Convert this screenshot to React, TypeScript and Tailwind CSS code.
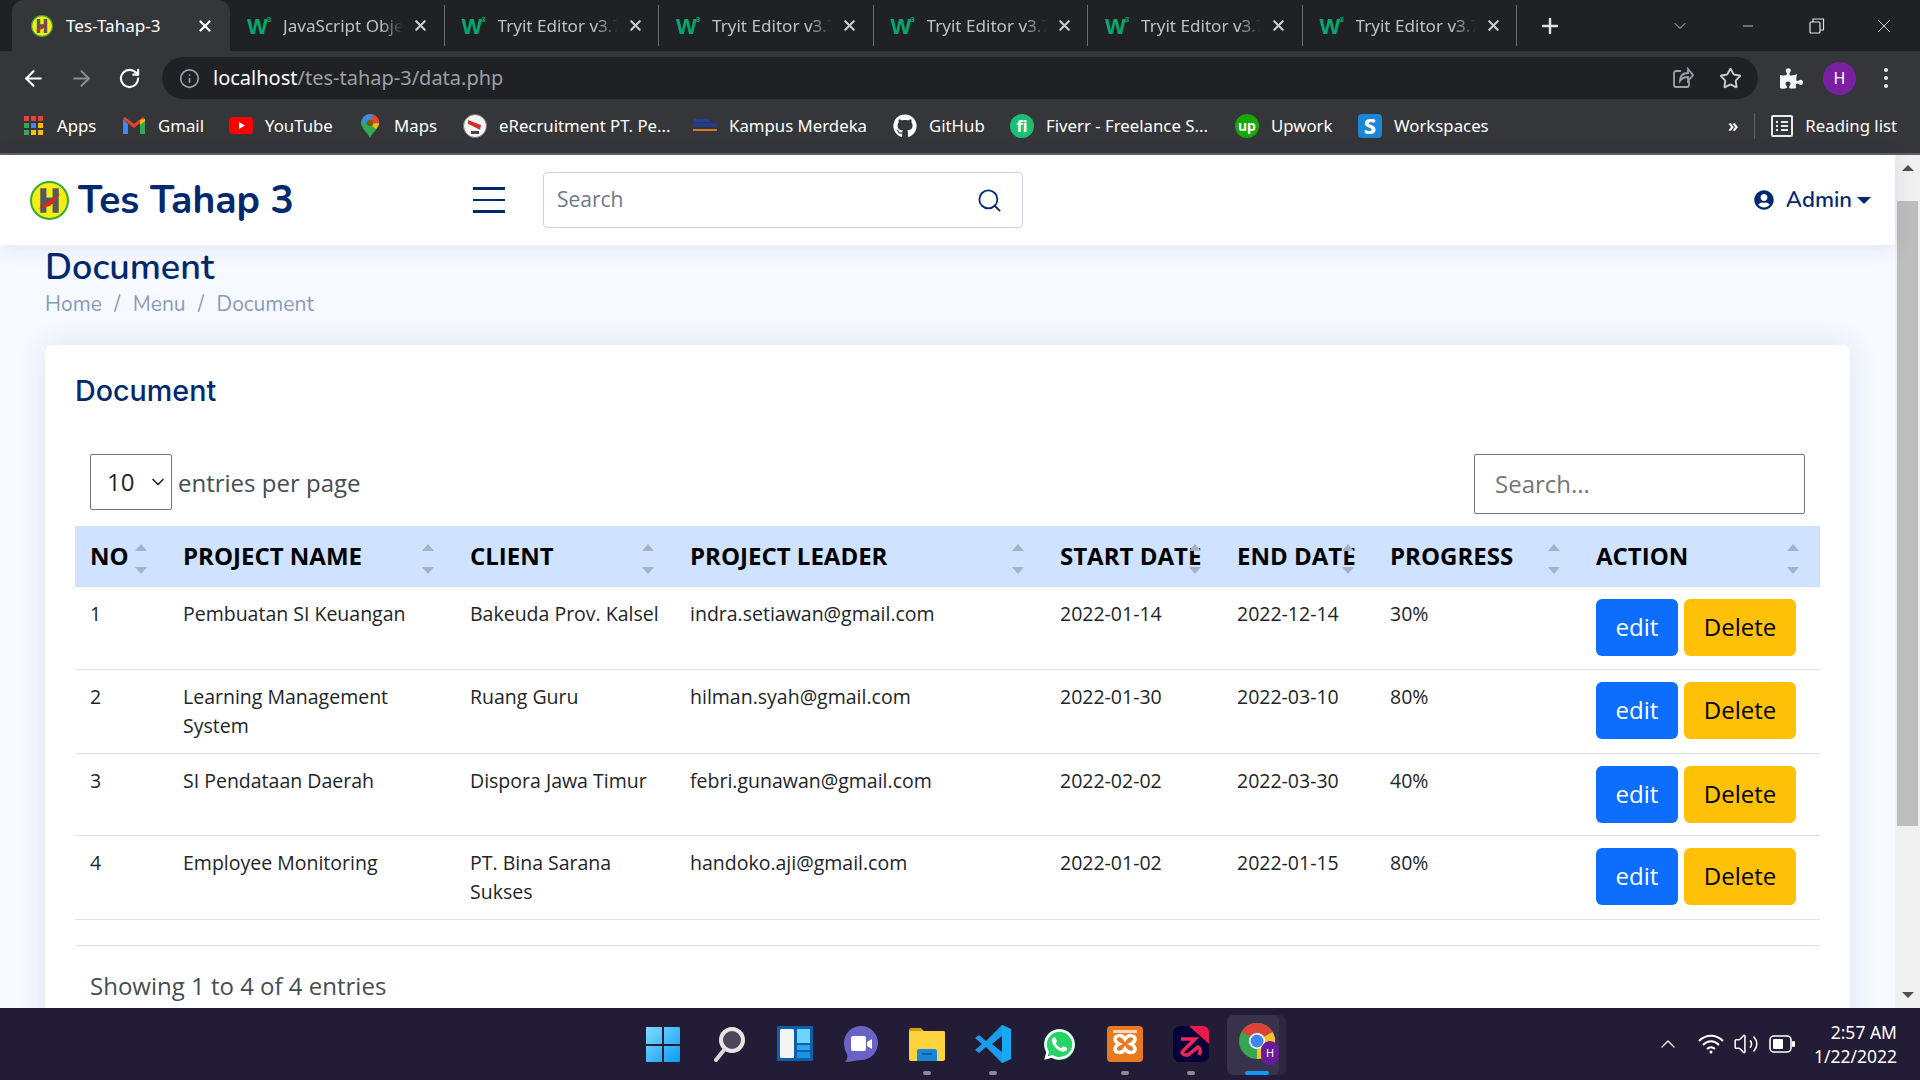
import React from "react";
import { ArrowLeft, ArrowRight, RotateCw, Info, Star, X, Plus, ChevronDown, ChevronUp, Minus, Search, Volume2 } from "lucide-react";
import { FaGithub, FaPuzzlePiece, FaUserCircle, FaWhatsapp } from "react-icons/fa";

const FontSys = "font-['Noto_Sans','Open_Sans',sans-serif]";

function LogoH({ size = 38 }: { size?: number }) {
  return (
    <svg width={size} height={size} viewBox="0 0 38 38">
      <circle cx="19" cy="19" r="18" fill="#f6ee12" stroke="#3aa935" strokeWidth="2" />
      <path d="M10 7h6v9h6V7h6v24h-6v-9h-6v9h-6z" fill="#55585c" />
      <path d="M8 27L30 12L20 24z" fill="#e2231a" />
    </svg>
  );
}

function W3() {
  return (
    <span className="flex h-[22px] w-[26px] shrink-0 items-start text-[#04aa6d] font-['Liberation_Sans',sans-serif] font-bold">
      <span className="text-[22px] leading-[23px] tracking-[-1px]">W</span>
      <span className="text-[8px] leading-[10px]">3</span>
    </span>
  );
}

function Tab({ label }: { label: string }) {
  return (
    <div className="flex h-[41px] w-[214.5px] shrink-0 items-center border-r border-[#6b6c70] pl-[17px]">
      <W3 />
      <span className="ml-[10px] w-[120px] overflow-hidden whitespace-nowrap text-[17.1px] text-[#bdc1c6] [mask-image:linear-gradient(to_right,black_82%,transparent)]">{label}</span>
      <X size={17} strokeWidth={3} className="ml-[9px] text-[#c8ccd0]" />
    </div>
  );
}

function Bookmark({ w, icon, label }: { w: string; icon: React.ReactNode; label: string }) {
  return (
    <div className={`flex items-center gap-[12px] ${w}`}>
      <span className="flex h-[24px] w-[24px] shrink-0 items-center justify-center">{icon}</span>
      <span className="whitespace-nowrap text-[16.8px] text-white">{label}</span>
    </div>
  );
}

const AppsIcon = () => {
  const c = ["#ea4335", "#ea4335", "#ea4335", "#34a853", "#4285f4", "#fbbc04", "#34a853", "#fbbc04", "#fbbc04"];
  return (
    <span className="grid grid-cols-3 gap-[2px]">
      {c.map((x, i) => (
        <span key={i} className="h-[5px] w-[5px]" style={{ background: x }} />
      ))}
    </span>
  );
};

const GmailIcon = () => (
  <svg width="22" height="17" viewBox="0 0 22 17">
    <path d="M0 2v15h5V7z" fill="#4285f4" />
    <path d="M22 2v15h-5V7z" fill="#34a853" />
    <path d="M0 2l11 9 11-9-2-2-9 7-9-7z" fill="#ea4335" />
    <path d="M17 3l5-1v2l-5 4z" fill="#fbbc04" />
  </svg>
);
const YouTubeIcon = () => (
  <svg width="24" height="17" viewBox="0 0 24 17">
    <rect width="24" height="17" rx="4" fill="#ff0000" />
    <path d="M10 5l6 3.5-6 3.5z" fill="#fff" />
  </svg>
);
const MapsIcon = () => (
  <svg width="18" height="24" viewBox="0 0 18 24">
    <path d="M9 0a9 9 0 0 1 9 9c0 5-6 9-9 15C6 18 0 14 0 9a9 9 0 0 1 9-9z" fill="#34a853" />
    <path d="M3 3a9 9 0 0 1 9-2.5L4 10 1 8a9 9 0 0 1 2-5z" fill="#4285f4" />
    <path d="M12 .5A9 9 0 0 1 18 9l-9 1z" fill="#ea4335" />
    <path d="M18 9c0 2-1 4-3 6L9 10z" fill="#fbbc04" />
    <circle cx="9" cy="9" r="3.2" fill="#7a5a10" />
  </svg>
);
const ERecruitIcon = () => (
  <svg width="24" height="24" viewBox="0 0 24 24">
    <circle cx="12" cy="12" r="11.5" fill="#f4f4f4" stroke="#777" />
    <path d="M5 6l13 5-1 5L5 10z" fill="#d32f2f" />
    <path d="M5 10l12 6-2 2L6 13z" fill="#fff" />
    <rect x="8" y="17" width="8" height="3" fill="#444" />
  </svg>
);
const KampusIcon = () => (
  <svg width="24" height="14" viewBox="0 0 24 14">
    <rect x="1" y="0" width="15" height="3" fill="#1f3f9e" />
    <rect x="0" y="4" width="24" height="4" fill="#22398f" />
    <rect x="0" y="10" width="24" height="2" fill="#d47a24" />
  </svg>
);

function ChromeBar() {
  return (
    <div className={`shrink-0 ${FontSys}`}>
      <div className="flex h-[51px] items-end bg-[#202124] pl-[12px]">
        <div className="flex h-[51px] w-[218px] shrink-0 items-center rounded-t-[12px] bg-[#35363a] pl-[19px]">
          <LogoH size={22} />
          <span className="ml-[13px] w-[120px] whitespace-nowrap text-[17.1px] text-white">Tes-Tahap-3</span>
          <X size={18} strokeWidth={3} className="ml-[10px] text-white" />
        </div>
        <div className="flex h-[51px] items-center">
          {["JavaScript Obje", "Tryit Editor v3.7", "Tryit Editor v3.7", "Tryit Editor v3.7", "Tryit Editor v3.7", "Tryit Editor v3.7"].map((t, i) => (
            <Tab key={i} label={t} />
          ))}
        </div>
        <div className="flex h-[51px] flex-1 items-center text-[#dee1e6]">
          <Plus size={24} strokeWidth={2.5} className="ml-[21px]" />
          <ChevronDown size={20} strokeWidth={1} className="ml-[108px]" />
          <Minus size={16} strokeWidth={1.2} className="ml-[50px]" />
          <svg width="16" height="16" viewBox="0 0 16 16" className="ml-[53px]" fill="none" stroke="#dee1e6" strokeWidth="1.2">
            <rect x="1" y="4" width="10" height="11" rx="1" />
            <path d="M4 4V1h10.500v11H11" />
          </svg>
          <X size={22} strokeWidth={1} className="ml-[48px]" />
        </div>
      </div>
      <div className="flex h-[52px] items-center bg-[#35363a] pt-[2px]">
        <ArrowLeft size={25} strokeWidth={2} className="ml-[21px] text-white" />
        <ArrowRight size={25} strokeWidth={2} className="ml-[23px] text-[#8a8b8e]" />
        <RotateCw size={23} strokeWidth={2.2} className="ml-[24px] text-white" />
        <div className="ml-[21px] flex h-[42px] w-[1596px] items-center rounded-full bg-[#202124]">
          <Info size={21} strokeWidth={2} className="ml-[17px] text-[#9aa0a6]" />
          <div className="ml-[13px] whitespace-nowrap text-[20px]">
            <span className="text-white">localhost</span>
            <span className="text-[#9aa0a6]">/tes-tahap-3/data.php</span>
          </div>
          <svg width="22" height="24" viewBox="0 0 22 24" fill="none" stroke="#9aa0a6" strokeWidth="1.8" className="ml-auto mr-[25px]">
            <path d="M9 5H4a2 2 0 0 0-2 2v12a2 2 0 0 0 2 2h11a2 2 0 0 0 2-2v-4" />
            <path d="M8 15c0-5 3-8 8-8V3l5 6-5 6v-4c-4 0-6 1-8 4z" />
          </svg>
          <Star size={23} strokeWidth={2} className="mr-[16px] text-[#c8cbd0]" />
        </div>
        <FaPuzzlePiece size={23} className="ml-[22px] text-[#f1f3f4]" />
        <span className="ml-[20px] flex h-[33px] w-[33px] items-center justify-center rounded-full bg-[#7b1fa2] text-[16px] text-white">H</span>
        <span className="ml-[28px] flex flex-col gap-[4px]">
          <span className="h-[4px] w-[4px] rounded-full bg-[#e8eaed]" />
          <span className="h-[4px] w-[4px] rounded-full bg-[#e8eaed]" />
          <span className="h-[4px] w-[4px] rounded-full bg-[#e8eaed]" />
        </span>
      </div>
      <div className="flex h-[52px] items-center border-b-2 border-[#5f6064] bg-[#35363a] pb-[5px] pl-[21px]">
        <Bookmark w="w-[101px]" icon={<AppsIcon />} label="Apps" />
        <Bookmark w="w-[107px]" icon={<GmailIcon />} label="Gmail" />
        <Bookmark w="w-[129px]" icon={<YouTubeIcon />} label="YouTube" />
        <Bookmark w="w-[105px]" icon={<MapsIcon />} label="Maps" />
        <Bookmark w="w-[230px]" icon={<ERecruitIcon />} label="eRecruitment PT. Pe..." />
        <Bookmark w="w-[200px]" icon={<KampusIcon />} label="Kampus Merdeka" />
        <Bookmark w="w-[117px]" icon={<FaGithub size={24} className="text-white" />} label="GitHub" />
        <Bookmark
          w="w-[225px]"
          icon={<span className="flex h-[24px] w-[24px] items-center justify-center rounded-full bg-[#1dbf73] text-[16px] font-bold text-white">fi</span>}
          label="Fiverr - Freelance S..."
        />
        <Bookmark
          w="w-[123px]"
          icon={<span className="flex h-[24px] w-[24px] items-center justify-center rounded-full bg-[#14a800] text-[14px] font-bold text-white">up</span>}
          label="Upwork"
        />
        <Bookmark
          w="w-[370px]"
          icon={<span className="flex h-[24px] w-[24px] items-center justify-center rounded-[4px] bg-[#1a87d6] text-[22px] font-extrabold text-white">S</span>}
          label="Workspaces"
        />
        <span className="text-[18px] font-semibold text-white">»</span>
        <span className="ml-[16px] h-[26px] w-px bg-[#5f6064]" />
        <svg width="22" height="24" viewBox="0 0 22 24" fill="none" stroke="#e8eaed" strokeWidth="2" className="ml-[16px]">
          <rect x="1" y="2" width="20" height="20" rx="1" />
          <path d="M5 8h2M5 12h2M5 16h2M10 8h7M10 12h7M10 16h7" />
        </svg>
        <span className="ml-[12px] whitespace-nowrap text-[16.8px] text-white">Reading list</span>
      </div>
    </div>
  );
}

function SiteHeader() {
  return (
    <header className="relative z-10 flex h-[90px] shrink-0 items-center bg-white pl-[30px] pr-[24px] shadow-[0px_2px_20px_rgba(1,41,112,0.1)]">
      <div className="flex w-[443px] items-center gap-[9px]">
        <LogoH size={39} />
        <span className="font-['Nunito','Lato',sans-serif] text-[39px] font-bold leading-none text-[#012970]">Tes Tahap 3</span>
      </div>
      <div className="flex w-[32px] flex-col gap-[9px]">
        <span className="h-[3px] bg-[#012970]" />
        <span className="h-[2px] bg-[#012970]" />
        <span className="h-[3px] bg-[#012970]" />
      </div>
      <div className="ml-[38px] flex h-[56px] w-[480px] items-center rounded-[4px] border border-[#ccd4e2] pl-[13px] pr-[19px]">
        <input placeholder="Search" className="min-w-0 flex-1 font-['Open_Sans',sans-serif] text-[21px] outline-none placeholder:text-[#6f7887]" />
        <Search size={27} strokeWidth={1.6} className="text-[#012970]" />
      </div>
      <div className="ml-auto flex items-center text-[#012970]">
        <FaUserCircle size={20} />
        <span className="ml-[12px] font-['Nunito','Lato',sans-serif] text-[22px] font-semibold">Admin</span>
        <span className="ml-[5px] h-0 w-0 border-x-[7px] border-t-[7px] border-x-transparent border-t-[#012970]" />
      </div>
    </header>
  );
}

const cols = [
  { t: "NO", w: "w-[93px]" },
  { t: "PROJECT NAME", w: "w-[287px]" },
  { t: "CLIENT", w: "w-[220px]" },
  { t: "PROJECT LEADER", w: "w-[370px]" },
  { t: "START DATE", w: "w-[177px]" },
  { t: "END DATE", w: "w-[153px]" },
  { t: "PROGRESS", w: "w-[206px]" },
  { t: "ACTION", w: "w-[239px]" },
];

const rows = [
  { h: "h-[83px]", c: ["1", "Pembuatan SI Keuangan", "Bakeuda Prov. Kalsel", "indra.setiawan@gmail.com", "2022-01-14", "2022-12-14", "30%"] },
  { h: "h-[84px]", c: ["2", "Learning Management System", "Ruang Guru", "hilman.syah@gmail.com", "2022-01-30", "2022-03-10", "80%"] },
  { h: "h-[82px]", c: ["3", "SI Pendataan Daerah", "Dispora Jawa Timur", "febri.gunawan@gmail.com", "2022-02-02", "2022-03-30", "40%"] },
  { h: "h-[84px]", c: ["4", "Employee Monitoring", "PT. Bina Sarana Sukses", "handoko.aji@gmail.com", "2022-01-02", "2022-01-15", "80%"] },
];

function DataTable() {
  return (
    <table className="w-full table-fixed text-left text-[#212529]">
      <thead>
        <tr className="h-[60px] border-b border-[#d8dde3] bg-[#cfe2ff]">
          {cols.map((c) => (
            <th key={c.t} className={`relative whitespace-nowrap px-[15px] text-[24px] font-bold text-black ${c.w}`}>
              {c.t}
              <span className="absolute right-[21px] top-[18px] h-0 w-0 border-x-[6px] border-b-[7px] border-x-transparent border-b-[#a6b3c6]" />
              <span className="absolute right-[21px] top-[41px] h-0 w-0 border-x-[6px] border-t-[7px] border-x-transparent border-t-[#a6b3c6]" />
            </th>
          ))}
        </tr>
      </thead>
      <tbody>
        {rows.map((r) => (
          <tr key={r.c[0]} className={`border-b border-[#dee2e6] ${r.h}`}>
            {r.c.map((v, i) => (
              <td key={i} className="px-[15px] py-[12px] align-top text-[19.5px] leading-[29px]">
                {v}
              </td>
            ))}
            <td className="px-[15px] py-[12px] align-top">
              <div className="flex gap-[6px]">
                <button className="h-[57px] w-[82px] rounded-[6px] bg-[#0d6efd] text-[24px] text-white">edit</button>
                <button className="h-[57px] w-[112px] rounded-[6px] bg-[#ffc107] text-[24px] text-black">Delete</button>
              </div>
            </td>
          </tr>
        ))}
      </tbody>
    </table>
  );
}

function Content() {
  return (
    <section className="flex-1 overflow-hidden bg-[#f6f9ff] px-[45px] pt-[1px] font-['Open_Sans',sans-serif]">
      <h1 className="font-['Nunito','Lato',sans-serif] text-[36px] font-semibold leading-[43px] text-[#012970]">Document</h1>
      <nav className="flex h-[31px] items-center gap-[12.5px] font-['Nunito','Lato',sans-serif] text-[21px] text-[#899bbd]">
        <span>Home</span>
        <span>/</span>
        <span>Menu</span>
        <span>/</span>
        <span>Document</span>
      </nav>
      <div className="mt-[25px] rounded-[7px] bg-white px-[30px] pt-[30px] pb-[40px] shadow-[0px_0px_30px_rgba(1,41,112,0.1)]">
        <h2 className="font-['Inter',sans-serif] text-[28.7px] font-medium leading-[32px] text-[#012970]">Document</h2>
        <div className="mt-[47px] flex items-start justify-between pl-[15px] pr-[15px]">
          <div className="flex items-center gap-[6px]">
            <div className="relative">
              <select defaultValue="10" className="h-[56px] w-[82px] appearance-none rounded-[2px] border border-[#767676] bg-white pl-[16px] text-[24px] text-[#212529] outline-none">
                <option value="10">10</option>
                <option value="25">25</option>
              </select>
              <ChevronDown size={20} strokeWidth={2} className="pointer-events-none absolute right-[4px] top-[18px] text-[#212529]" />
            </div>
            <span className="pt-[2px] text-[24px] text-[#454d55]">entries per page</span>
          </div>
          <input placeholder="Search..." className="h-[60px] w-[331px] rounded-[2px] border border-[#767676] px-[20px] pb-[2px] text-[24px] outline-none placeholder:text-[#757575]" />
        </div>
        <div className="mt-[12px]">
          <DataTable />
        </div>
        <div className="mt-[25px] border-t border-[#dee2e6] px-[15px] pt-[22px] text-[24px] leading-[36px] text-[#454d55]">Showing 1 to 4 of 4 entries</div>
      </div>
    </section>
  );
}

function Scrollbar() {
  return (
    <div className="flex w-[25px] shrink-0 flex-col items-center bg-[#f0f0f0] px-[2px]">
      <span className="mt-[10px] h-0 w-0 border-x-[6px] border-b-[6px] border-x-transparent border-b-[#505050]" />
      <span className="mt-[30px] h-[625px] w-full bg-[#bdbdbd]" />
      <span className="mt-auto mb-[10px] h-0 w-0 border-x-[6px] border-t-[6px] border-x-transparent border-t-[#505050]" />
    </div>
  );
}

const WinIcon = () => (
  <svg width="34" height="35" viewBox="0 0 34 35">
    <defs>
      <linearGradient id="w" x1="0" y1="0" x2="1" y2="1">
        <stop offset="0" stopColor="#7fdcff" />
        <stop offset="1" stopColor="#0a9bf2" />
      </linearGradient>
    </defs>
    <path d="M0 1a1 1 0 0 1 1-1h15v17H0zM18 0h15a1 1 0 0 1 1 1v16H18zM0 19h16v16H1a1 1 0 0 1-1-1zM18 19h16v15a1 1 0 0 1-1 1H18z" fill="url(#w)" />
  </svg>
);
const SearchIcon = () => (
  <svg width="32" height="36" viewBox="0 0 32 36">
    <circle cx="19" cy="14" r="11" fill="#4d4659" stroke="#e6e6e6" strokeWidth="4" />
    <path d="M11 24L3 34" stroke="#d8d8d8" strokeWidth="4" strokeLinecap="round" />
  </svg>
);
const WidgetsIcon = () => (
  <svg width="36" height="36" viewBox="0 0 36 36">
    <rect width="36" height="35" rx="1" fill="#0c5fa8" />
    <rect x="3" y="3" width="14" height="29" rx="1.500" fill="#f4f4f4" />
    <rect x="20" y="3" width="13" height="14" fill="#6dd5ff" />
    <rect x="20" y="19" width="13" height="5" fill="#28a8f0" />
    <rect x="20" y="26" width="13" height="6" fill="#1a93e4" />
  </svg>
);
const ChatIcon = () => (
  <svg width="34" height="36" viewBox="0 0 34 36">
    <path d="M17 0c10 0 17 8 17 17s-7 17-17 17c-4 0-10 2-16 2 2-2 3-5 2-8-2-3-3-7-3-11C0 8 7 0 17 0z" fill="#6a63c6" />
    <rect x="7" y="10" width="15" height="15" rx="2" fill="#fff" />
    <path d="M23 16l5-3v10l-5-3z" fill="#fff" />
  </svg>
);
const FolderIcon = () => (
  <svg width="36" height="34" viewBox="0 0 36 34">
    <path d="M0 3a2 2 0 0 1 2-2h10l3 3h19a2 2 0 0 1 2 2v6H0z" fill="#d99e06" />
    <rect y="4" width="36" height="30" rx="2" fill="#fdd23f" />
    <path d="M8 34v-10a2 2 0 0 1 2-2h16a2 2 0 0 1 2 2v10z" fill="#1a87d6" />
    <rect x="13" y="26" width="10" height="2" fill="#0c5fa8" />
  </svg>
);
const VsCodeIcon = () => (
  <svg width="36" height="38" viewBox="0 0 36 38">
    <path fillRule="evenodd" d="M27 0L11 16 4 10 0 13l7 6-7 6 4 3 7-6 16 16 9-4V4zM27 11v16l-10-8z" fill="#1c9be8" />
    <path d="M27 0l9 4v30l-9 4z" fill="#18a9f5" />
  </svg>
);
const WhatsAppIcon = () => (
  <span className="relative flex h-[35px] w-[35px] items-center justify-center">
    <span className="absolute inset-[2px] rounded-full bg-[#25d366]" />
    <FaWhatsapp size={35} className="relative text-white" />
  </span>
);
const XamppIcon = () => (
  <svg width="36" height="36" viewBox="0 0 36 36">
    <rect width="36" height="36" rx="4" fill="#e8791f" />
    <rect x="6" y="4" width="24" height="3" fill="#fff" opacity=".7" />
    <path d="M18 13c-3-5-10-4-10 0 0 2 2 4 4 5-2 1-4 3-4 5 0 4 7 5 10 0 3 5 10 4 10 0 0-2-2-4-4-5 2-1 4-3 4-5 0-4-7-5-10 0z" fill="none" stroke="#fff" strokeWidth="3.500" />
  </svg>
);
const StormIcon = () => (
  <svg width="36" height="36" viewBox="0 0 36 36">
    <rect width="36" height="36" rx="7" fill="#050238" />
    <path d="M16 0h14a6 6 0 0 1 6 6v12z" fill="#e8194b" />
    <path d="M8 13h14l-12 12c-2 2 0 4 3 4h2l10-8c3 2 3 4 1 8" fill="none" stroke="#f0245a" strokeWidth="3.500" />
  </svg>
);
const ChromeIcon = () => (
  <div className="relative h-[42px] w-[36px]">
    <svg width="36" height="36" viewBox="0 0 36 36" className="absolute left-0 top-0">
      <circle cx="18" cy="18" r="18" fill="#34a853" />
      <path d="M18 0a18 18 0 0 1 15.600 9L18 18 2.400 9A18 18 0 0 1 18 0z" fill="#db4437" />
      <path d="M33.600 9A18 18 0 0 1 18 36l0-18z" fill="#fbc02d" />
      <circle cx="18" cy="18" r="8" fill="#fff" />
      <circle cx="18" cy="18" r="6.500" fill="#4285f4" />
    </svg>
    <span className="absolute bottom-0 right-[-4px] flex h-[24px] w-[18px] items-center justify-center rounded-full bg-[#6a1b9a] text-[11px] text-white">H</span>
  </div>
);

function TaskItem({ icon, pill, active }: { icon: React.ReactNode; pill?: boolean; active?: boolean }) {
  return (
    <div className="relative flex h-[72px] w-[66px] shrink-0 items-center justify-center">
      {active && <span className="absolute left-[3px] top-[7px] h-[60px] w-[52px] rounded-[6px] bg-[#38334a] shadow-[7px_0_0_#2d2840]" />}
      <span className="relative">{icon}</span>
      {pill && <span className="absolute bottom-[5px] h-[4px] w-[8px] rounded-full bg-[#8e8b97]" />}
      {active && <span className="absolute bottom-[5px] left-[21px] h-[4px] w-[24px] rounded-full bg-[#0f9bf5]" />}
    </div>
  );
}

function Taskbar() {
  return (
    <footer className="flex h-[72px] shrink-0 items-center bg-[#231c36] font-['Noto_Sans',sans-serif] text-white">
      <div className="w-[630px] shrink-0" />
      <div className="flex shrink-0">
        <TaskItem icon={<WinIcon />} />
        <TaskItem icon={<SearchIcon />} />
        <TaskItem icon={<WidgetsIcon />} />
        <TaskItem icon={<ChatIcon />} />
        <TaskItem icon={<FolderIcon />} pill />
        <TaskItem icon={<VsCodeIcon />} pill />
        <TaskItem icon={<WhatsAppIcon />} />
        <TaskItem icon={<XamppIcon />} pill />
        <TaskItem icon={<StormIcon />} pill />
        <TaskItem icon={<ChromeIcon />} active />
      </div>
      <div className="flex flex-1 items-center justify-end pr-[23px]">
        <ChevronUp size={24} strokeWidth={1.2} className="mr-[18px]" />
        <svg width="26" height="20" viewBox="0 0 26 20" fill="none" stroke="#fff" strokeWidth="2" className="mr-[9px]">
          <path d="M1 7c7-7 17-7 24 0M5 11c5-5 11-5 16 0M9 15c2.500-2.500 5.500-2.500 8 0" />
          <circle cx="13" cy="18" r="1.500" fill="#fff" stroke="none" />
        </svg>
        <Volume2 size={26} strokeWidth={1.4} className="mr-[10px]" />
        <svg width="26" height="18" viewBox="0 0 26 18" className="mr-[19px]" fill="none">
          <rect x="1" y="1" width="21" height="16" rx="4" stroke="#fff" strokeWidth="1.6" />
          <rect x="4" y="4" width="10" height="10" rx="1" fill="#fff" />
          <rect x="23" y="6" width="3" height="6" rx="1" fill="#fff" />
        </svg>
        <div className="text-right text-[17.5px] leading-[24px]">
          <div>2:57 AM</div>
          <div>1/22/2022</div>
        </div>
      </div>
    </footer>
  );
}

export default function App() {
  return (
    <div className="flex h-[1080px] w-[1920px] flex-col overflow-hidden bg-[#f6f9ff]">
      <ChromeBar />
      <div className="flex min-h-0 flex-1">
        <main className="flex min-w-0 flex-1 flex-col">
          <SiteHeader />
          <Content />
        </main>
        <Scrollbar />
      </div>
      <Taskbar />
    </div>
  );
}
